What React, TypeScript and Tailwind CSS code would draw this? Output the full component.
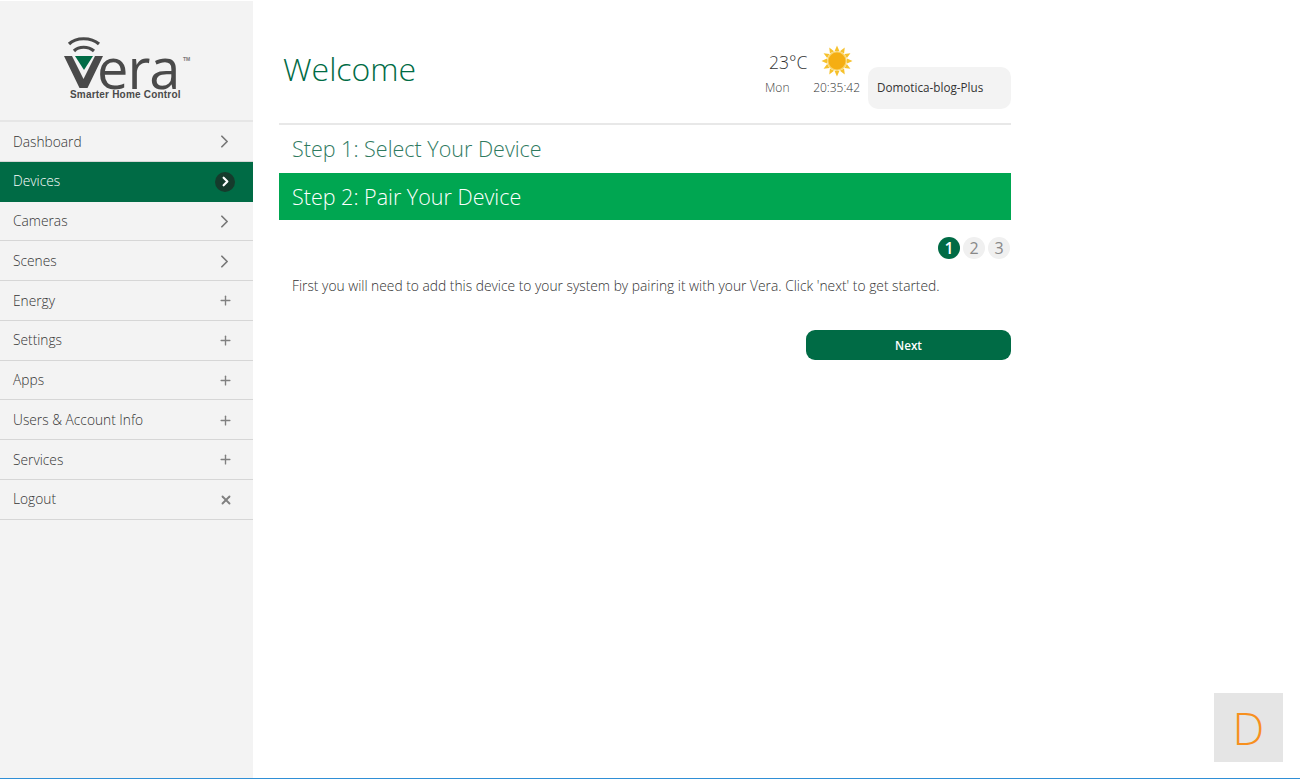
import { ChevronRight, Plus, X } from "lucide-react";

const items = [
  { label: "Dashboard", icon: "chev" },
  { label: "Devices", icon: "active" },
  { label: "Cameras", icon: "chev" },
  { label: "Scenes", icon: "chev" },
  { label: "Energy", icon: "plus" },
  { label: "Settings", icon: "plus" },
  { label: "Apps", icon: "plus" },
  { label: "Users & Account Info", icon: "plus" },
  { label: "Services", icon: "plus" },
  { label: "Logout", icon: "x" },
];

function Sun() {
  const rays = Array.from({ length: 12 }, (_, i) => i * 30);
  return (
    <svg width="32" height="32" viewBox="0 0 32 32">
      {rays.map((r) => (
        <polygon key={r} points="16,0.5 18.4,6 13.6,6" fill="#f6c12c" transform={`rotate(${r} 16 16)`} />
      ))}
      <circle cx="16" cy="16" r="10" fill="#f9d36a" />
      <circle cx="16" cy="16" r="8.5" fill="#f5ae12" />
    </svg>
  );
}

function Logo() {
  return (
    <div className="relative w-[130px] h-[66px]">
      <svg className="absolute left-0 top-0" width="50" height="54" viewBox="0 0 50 54">
        <path d="M5 7 C12 0 27 0 35 7" fill="none" stroke="#4a4a4a" strokeWidth="3.2" />
        <path d="M10 14 C15 9 24 9 30 14" fill="none" stroke="#4a4a4a" strokeWidth="3.2" />
        <polygon points="0,19 8,19 19.5,42 31,19 39,19 23.5,51 15.5,51" fill="#4a4a4a" />
        <polygon points="11,19 29,19 20,33" fill="#006b45" />
      </svg>
      <span className="absolute left-[33px] top-[10px] text-[56px] leading-[40px] font-['Open_Sans'] text-[#4a4a4a] tracking-[-1px] font-medium">
        era
      </span>
      <span className="absolute left-[119px] top-[19px] text-[5px] leading-[6px] font-['Liberation_Sans'] font-bold text-[#777]">TM</span>
      <span className="absolute left-[6px] top-[52px] text-[10px] leading-[12px] font-['Liberation_Sans'] font-bold text-[#4a4a4a] tracking-[0.2px] whitespace-nowrap">
        Smarter Home Control
      </span>
    </div>
  );
}

export default function App() {
  return (
    <div className="relative w-[1300px] h-[779px] overflow-hidden bg-white font-['Open_Sans',sans-serif] font-light flex flex-col">
      <div className="flex flex-1 min-h-0">
        <aside className="w-[253px] shrink-0 bg-[#f3f3f3] mt-px">
          <div className="h-[121px] pt-[36px] pl-[64px] border-b-2 border-[#e6e6e6]">
            <Logo />
          </div>
          <nav className="flex flex-col">
            {items.map((it) => {
              const active = it.icon === "active";
              return (
                <div
                  key={it.label}
                  className={`h-[39.75px] flex items-center justify-between pt-px pl-[13px] pr-[19px] text-[13.75px] border-b ${
                    active ? "bg-[#006b45] text-white border-[#006b45]" : "text-[#333] border-[#d6d6d6]"
                  }`}
                >
                  <span>{it.label}</span>
                  {it.icon === "chev" && <ChevronRight size={21} strokeWidth={2} className="text-[#777] mr-[-1px]" />}
                  {it.icon === "active" && (
                    <span className="w-[20px] h-[20px] rounded-full bg-[#153b2c] flex items-center justify-center mr-[-1px]">
                      <ChevronRight size={15} strokeWidth={3.5} className="text-white" />
                    </span>
                  )}
                  {it.icon === "plus" && <Plus size={15} strokeWidth={2.2} className="text-[#808080] mr-[1px]" />}
                  {it.icon === "x" && <X size={14} strokeWidth={3.2} className="text-[#808080] mr-[1px]" />}
                </div>
              );
            })}
          </nav>
        </aside>

        <main className="w-[732px] ml-[26px] flex flex-col">
          <header className="h-[125px] border-b-2 border-[#e8e8e8] flex justify-between relative">
            <h1 className="ml-[4px] mt-[45px] text-[32px] leading-[48px] text-[#006b45] font-light">Welcome</h1>
            <div className="flex items-start mt-[45px]">
              <div className="w-[100px] flex flex-col items-stretch">
                <div className="flex items-center h-[32px]">
                  <span className="ml-[1px] mt-[2px] text-[17.5px] leading-[24px] text-[#333]">23°C</span>
                  <span className="ml-[14px]"><Sun /></span>
                </div>
                <div className="flex justify-between text-[12px] leading-[18px] text-[#444] mt-[2px] mr-[8px]">
                  <span className="ml-[-3px]">Mon</span>
                  <span className="font-light text-[#333]">20:35:42</span>
                </div>
              </div>
              <div className="mt-[22px] w-[143px] h-[42px] rounded-[10px] bg-[#f3f3f3] flex items-center pl-[9px] text-[11.7px] text-[#333] font-normal">
                Domotica-blog-Plus
              </div>
            </div>
          </header>

          <div className="h-[48px] flex items-center pl-[13px] text-[21.5px] text-[#2f7a5f]">Step 1: Select Your Device</div>
          <div className="h-[47px] bg-[#00a651] flex items-center pt-px pl-[13px] text-[21.5px] text-white">Step 2: Pair Your Device</div>

          <div className="flex justify-end gap-[3px] mt-[17px] mr-px">
            <span className="w-[22px] h-[22px] rounded-full bg-[#006b45] text-white flex items-center justify-center text-[16px] font-semibold">1</span>
            <span className="w-[22px] h-[22px] rounded-full bg-[#f0f0f0] text-[#888] flex items-center justify-center text-[16px] font-normal">2</span>
            <span className="w-[22px] h-[22px] rounded-full bg-[#f0f0f0] text-[#888] flex items-center justify-center text-[16px] font-normal">3</span>
          </div>

          <p className="mt-[17px] ml-[13px] text-[13.8px] leading-[20px] text-[#333] whitespace-nowrap">
            First you will need to add this device to your system by pairing it with your Vera. Click 'next' to get started.
          </p>

          <div className="flex justify-end mt-[34px]">
            <button className="w-[205px] h-[30px] rounded-[9px] bg-[#006b45] text-white text-[11.7px] font-semibold pt-[1px]">Next</button>
          </div>
        </main>
      </div>

      <div className="absolute left-[1214px] top-[693px] w-[69px] h-[69px] bg-[#e5e5e5] flex items-center justify-center text-[45px] leading-none text-[#f7901e] font-light">
        D
      </div>
      <div className="h-px shrink-0 bg-[#2f8fd6]" />
    </div>
  );
}
